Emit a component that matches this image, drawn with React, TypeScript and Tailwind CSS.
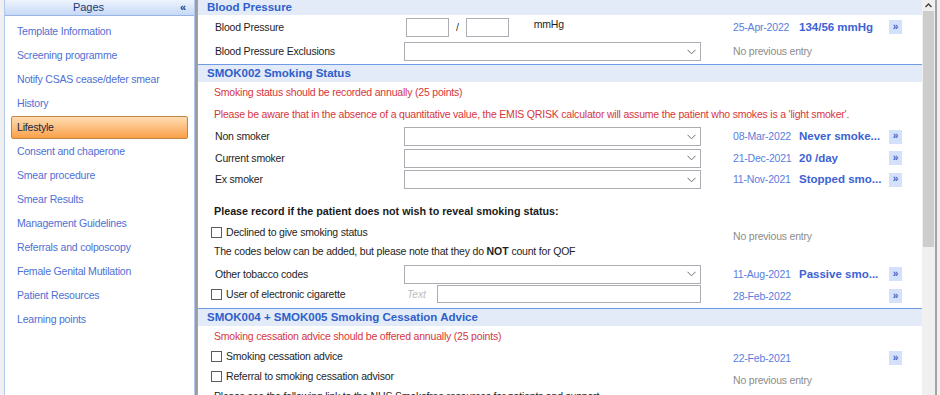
import React from "react";

const pages = [
  "Template Information",
  "Screening programme",
  "Notify CSAS cease/defer smear",
  "History",
  "Lifestyle",
  "Consent and chaperone",
  "Smear procedure",
  "Smear Results",
  "Management Guidelines",
  "Referrals and colposcopy",
  "Female Genital Mutilation",
  "Patient Resources",
  "Learning points",
];

const Chevron = () => (
  <svg width="9" height="6" viewBox="0 0 9 6" className="shrink-0">
    <path d="M0.5 0.8 L4.5 4.8 L8.5 0.8" fill="none" stroke="#6b6b6b" strokeWidth="1" />
  </svg>
);

const Select = () => (
  <div className="flex h-[19px] w-[297px] items-center justify-end border border-[#abadb3] bg-white pr-[4px]">
    <Chevron />
  </div>
);

const Jump = () => (
  <div className="flex h-[14px] w-[13px] items-center justify-center bg-[#d3e2fa] pb-[1px] text-[10px] font-bold leading-none tracking-normal text-[#3b62c6]">
    »
  </div>
);

const Checkbox = () => <span className="mr-[4px] inline-block h-[11px] w-[11px] shrink-0 border border-[#5c5c5c] bg-white" />;

// AIDEV-NOTE: columnas fijas: etiqueta | control | hueco | fecha | valor | botón
type RowProps = {
  label: React.ReactNode;
  control?: React.ReactNode;
  date?: string;
  value?: string;
  none?: boolean;
  jump?: boolean;
  rowClass: string;
  entryClass?: string;
  check?: boolean;
};

const FieldRow = ({ label, control, date, value, none, jump, rowClass, entryClass = "", check }: RowProps) => (
  <div className={`grid grid-cols-[206px_297px_32px_66px_90px_13px] items-center ${rowClass}`}>
    <div className={check ? "flex items-center pl-[13px] text-[#1e1e1e]" : "pl-[17px] text-[#1e1e1e]"}>
      {check && <Checkbox />}
      {label}
    </div>
    <div>{control}</div>
    <div />
    {none ? (
      <div className={`col-span-2 whitespace-nowrap text-[#8c8c8c] ${entryClass}`}>No previous entry</div>
    ) : (
      <>
        <div className={`whitespace-nowrap text-[#5a7edc] ${entryClass}`}>{date}</div>
        <div className={`whitespace-nowrap text-[11.5px] font-bold tracking-normal text-[#3c62d3] ${entryClass}`}>{value}</div>
      </>
    )}
    <div className={entryClass}>{jump && <Jump />}</div>
  </div>
);

const Header = ({ children, first }: { children: React.ReactNode; first?: boolean }) => (
  <div
    className={
      first
        ? "flex h-[15px] items-center bg-[#e3eaf8] pb-[1px] pl-[9px] text-[11.5px] font-bold tracking-normal text-[#2f5fca]"
        : "flex h-[18px] items-center border-t border-[#6f9be4] bg-[#e3eaf8] pl-[9px] text-[11.5px] font-bold tracking-normal text-[#2f5fca]"
    }
  >
    {children}
  </div>
);

export default function App() {
  return (
    <div className="flex h-[395px] w-[940px] overflow-hidden bg-[#f0f0f0] font-['Liberation_Sans',Arial,sans-serif] text-[10.5px] leading-[13px] tracking-[-0.2px]">
      {/* Sidebar */}
      <aside className="ml-[4px] flex w-[191px] shrink-0 flex-col border-x border-[#b3c8ec] bg-white">
        <div className="flex h-[16px] shrink-0 items-center border-b border-[#97b4e3] bg-gradient-to-b from-[#eef4fd] to-[#c6d9f5] text-[11px] text-[#1d3b78]">
          <span className="flex-1 text-center tracking-normal">Pages</span>
          <span className="w-[22px] text-center text-[11px] font-bold leading-none">«</span>
        </div>
        <div className="pt-[3px]">
          {pages.map((p) => (
            <div key={p} className="flex h-[24px] items-center px-[6px]">
              {p === "Lifestyle" ? (
                <div className="flex h-[23px] w-full items-center rounded-[2px] border border-[#c08848] bg-gradient-to-b from-[#fddcb0] to-[#f9a046] px-[5px] text-[#1c2540]">
                  {p}
                </div>
              ) : (
                <div className="px-[6px] text-[#4f70d2]">{p}</div>
              )}
            </div>
          ))}
        </div>
      </aside>
      <div className="w-[2px] shrink-0 bg-[#9c9c9c]" />

      {/* Content */}
      <main className="flex w-[725px] shrink-0 flex-col overflow-hidden border-l border-[#8aa7dc] bg-white *:shrink-0">
        <Header first>Blood Pressure</Header>
        <div className="grid h-[24px] grid-cols-[206px_297px_32px_66px_90px_13px] items-center">
          <div className="pl-[17px] text-[#1e1e1e]">Blood Pressure</div>
          <div className="flex h-full items-center">
            <div className="ml-[2px] h-[19px] w-[43px] border border-[#abadb3]" />
            <span className="mx-[7px] text-[#333]">/</span>
            <div className="h-[19px] w-[43px] border border-[#abadb3]" />
            <span className="ml-[25px] self-start pt-[3px] text-[#1e1e1e]">mmHg</span>
          </div>
          <div />
          <div className="whitespace-nowrap text-[#5a7edc]">25-Apr-2022</div>
          <div className="whitespace-nowrap text-[11.5px] font-bold tracking-normal text-[#3c62d3]">134/56 mmHg</div>
          <div>
            <Jump />
          </div>
        </div>
        <FieldRow rowClass="h-[25px]" label="Blood Pressure Exclusions" control={<Select />} none />

        <Header>SMOK002 Smoking Status</Header>
        <div className="flex h-[21px] items-center pl-[16px] text-[#d6363b]">
          Smoking status should be recorded annually (25 points)
        </div>
        <div className="flex h-[23px] items-center whitespace-nowrap pl-[16px] text-[#d6363b]">
          Please be aware that in the absence of a quantitative value, the EMIS QRISK calculator will assume the patient who smokes is a 'light smoker'.
        </div>
        <FieldRow rowClass="h-[21.5px]" label="Non smoker" control={<Select />} date="08-Mar-2022" value="Never smoke..." jump />
        <FieldRow rowClass="h-[21.5px]" label="Current smoker" control={<Select />} date="21-Dec-2021" value="20 /day" jump />
        <FieldRow rowClass="h-[21.5px]" label="Ex smoker" control={<Select />} date="11-Nov-2021" value="Stopped smo..." jump />

        <div className="mt-[10.5px] flex h-[21px] items-center pl-[16px] text-[10.75px] font-bold tracking-normal text-[#1a1a1a]">
          Please record if the patient does not wish to reveal smoking status:
        </div>
        <FieldRow rowClass="h-[17px]" check label="Declined to give smoking status" none entryClass="mt-[8px]" />
        <div className="flex h-[25.5px] items-center pl-[16px] text-[#1e1e1e]">
          The codes below can be added, but please note that they do&nbsp;<b className="tracking-normal">NOT</b>&nbsp;count for QOF
        </div>
        <FieldRow rowClass="h-[19.5px]" label="Other tobacco codes" control={<Select />} date="11-Aug-2021" value="Passive smo..." jump />
        <FieldRow
          rowClass="h-[20px]"
          check
          label="User of electronic cigarette"
          control={
            <div className="flex items-center">
              <span className="w-[33px] pl-[3px] italic text-[#bdbdbd]">Text</span>
              <div className="h-[18px] w-[264px] border border-[#abadb3]" />
            </div>
          }
          date="28-Feb-2022"
          entryClass="mt-[4px]"
          jump
        />

        <div className="mt-[4px]">
          <Header>SMOK004 + SMOK005 Smoking Cessation Advice</Header>
        </div>
        <div className="flex h-[20px] items-center pl-[16px] text-[#d6363b]">
          Smoking cessation advice should be offered annually (25 points)
        </div>
        <FieldRow rowClass="h-[20px]" check label="Smoking cessation advice" date="22-Feb-2021" jump entryClass="mt-[4px]" />
        <FieldRow rowClass="h-[20px]" check label="Referral to smoking cessation advisor" none entryClass="mt-[8px]" />
        <div className="flex h-[20px] items-center pl-[16px] text-[#1e1e1e]">
          Please see the following link to the NHS Smokefree resources for patients and support
        </div>
      </main>

      {/* Scrollbar */}
      <div className="flex w-[13px] shrink-0 flex-col bg-[#f0f0f0]">
        <div className="flex h-[11px] items-center justify-center">
          <svg width="7" height="5" viewBox="0 0 7 5">
            <path d="M0.5 4 L3.5 1 L6.5 4" fill="none" stroke="#404040" strokeWidth="1.4" />
          </svg>
        </div>
        <div className="mx-[1px] h-[236px] bg-[#cdcdcd]" />
      </div>
      <div className="w-[2px] shrink-0 bg-[#a3a3a3]" />
    </div>
  );
}
